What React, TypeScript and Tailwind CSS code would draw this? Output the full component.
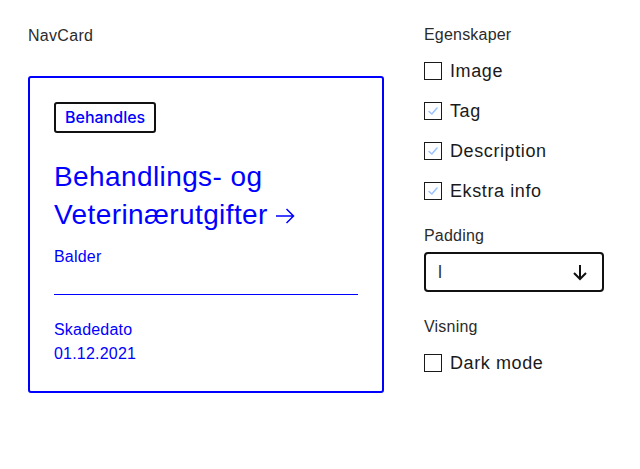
import React from "react";

const Check = ({ checked, label }: { checked: boolean; label: string }) => (
  <div className="flex h-10 items-center gap-2">
    <div className="flex h-[18px] w-[18px] items-center justify-center border-[1.5px] border-[#1a1a1a] bg-white">
      {checked && (
        <svg width="12" height="12" viewBox="0 0 12 12" fill="none">
          <path d="M2 6.5 L4.8 9 L10 3" stroke="#9ec3ff" strokeWidth="1.6" strokeLinecap="round" strokeLinejoin="round" />
        </svg>
      )}
    </div>
    <span className="text-[18px] leading-6 tracking-[0.6px] text-[#1a1a1a]">{label}</span>
  </div>
);

export default function App() {
  return (
    <div
      className="flex gap-10 bg-white pl-[28px] pt-[23px] min-h-[469px]"
      style={{ fontFamily: '"Liberation Sans", Arial, sans-serif' }}
    >
      <div className="flex w-[356px] flex-col">
        <div className="text-[16px] leading-6 tracking-[0.3px] text-[#2b2b2b] pt-[1px]">NavCard</div>
        <div className="mt-[28px] flex flex-col rounded-[3px] border-2 border-[#0000ff] px-6 pt-6 pb-[25px] text-[#0000ff]">
          <div className="self-start rounded-[3px] border-2 border-[#111] px-[9px] py-[3px] text-[16px] leading-[21px] font-medium" style={{ fontFamily: "Inter, sans-serif" }}>
            Behandles
          </div>
          <div className="mt-[25px] text-[28px] leading-[38px] tracking-[0.4px]">
            Behandlings- og
            <br />
            Veterinærutgifter
            <svg className="ml-[6px] inline-block align-[-3px]" width="22" height="22" viewBox="0 0 22 22" fill="none">
              <path d="M2 11 H19.5 M12.5 4 L19.5 11 L12.5 18" stroke="#0000ff" strokeWidth="1.5" />
            </svg>
          </div>
          <div className="mt-[11px] text-[16px] leading-6 tracking-[0.2px]">Balder</div>
          <div className="mt-[25px] h-px bg-[#0000ff]" />
          <div className="mt-[23px] text-[16px] leading-6 tracking-[0.2px]">Skadedato</div>
          <div className="text-[16px] leading-6 tracking-[0.2px]">01.12.2021</div>
        </div>
      </div>
      <div className="flex w-[180px] flex-col">
        <div className="text-[16px] leading-6 tracking-[0.2px] text-[#2b2b2b]">Egenskaper</div>
        <div className="mt-[4px] flex flex-col">
          <Check checked={false} label="Image" />
          <Check checked={true} label="Tag" />
          <Check checked={true} label="Description" />
          <Check checked={true} label="Ekstra info" />
        </div>
        <div className="mt-[13px] text-[16px] leading-6 tracking-[0.2px] text-[#2b2b2b]">Padding</div>
        <div className="mt-[4px] flex h-10 items-center justify-between rounded-[4px] border-2 border-[#111] pl-3 pr-[13px]">
          <span className="text-[18px] leading-6 text-[#333]">l</span>
          <svg width="18" height="18" viewBox="0 0 18 18" fill="none">
            <path d="M9 2 V16 M3 10 L9 16 L15 10" stroke="#111" strokeWidth="2" />
          </svg>
        </div>
        <div className="mt-[23px] text-[16px] leading-6 tracking-[0.2px] text-[#2b2b2b]">Visning</div>
        <div className="mt-[4px]">
          <Check checked={false} label="Dark mode" />
        </div>
      </div>
    </div>
  );
}
